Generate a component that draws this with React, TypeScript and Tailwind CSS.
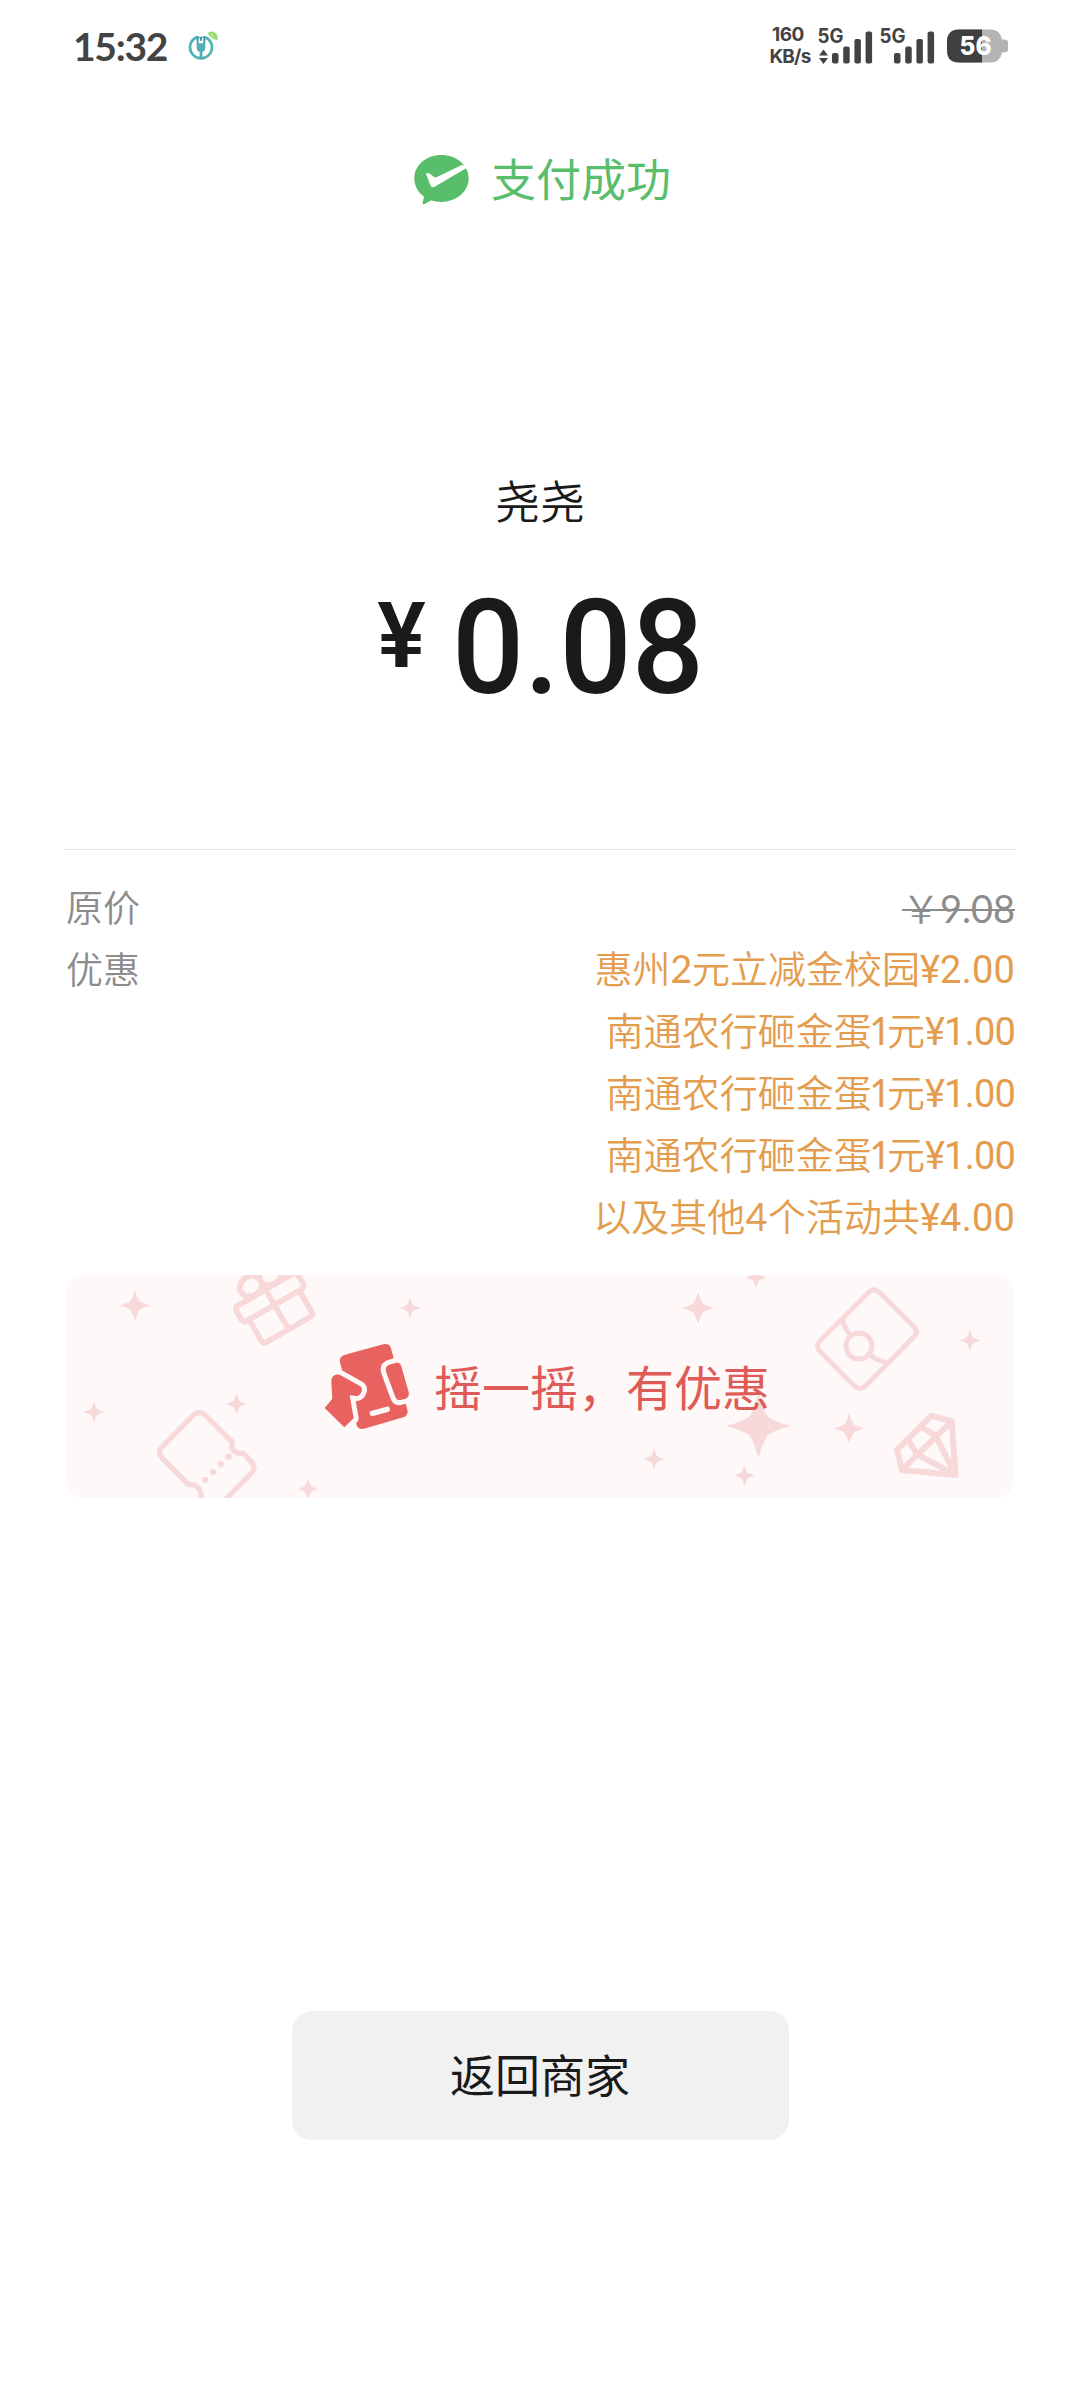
import React from 'react';

interface Discount {
  name: string;
  amount: string;
}

const discounts: Discount[] = [
  { name: '惠州2元立减金校园', amount: '¥2.00' },
  { name: '南通农行砸金蛋1元', amount: '¥1.00' },
  { name: '南通农行砸金蛋1元', amount: '¥1.00' },
  { name: '南通农行砸金蛋1元', amount: '¥1.00' },
  { name: '以及其他4个活动共', amount: '¥4.00' },
];

// x, y, radius
const stars: [number, number, number][] = [
  [69, 30.5, 15.5],
  [28, 137, 10.5],
  [170.5, 129, 10.5],
  [242, 214, 10.5],
  [344, 33, 10.5],
  [632, 33, 16],
  [690, 2.5, 10.5],
  [692.5, 151, 32],
  [588, 184, 10.5],
  [678.5, 200.5, 10.5],
  [904, 65.5, 10.5],
  [783, 153.5, 15.5],
];

const Signal = ({ data = false }: { data?: boolean }) => (
  <svg className="overflow-visible" width="56" height="44" viewBox="0 -4 56 44" fill="#434343">
    <text x="-0.5" y="14.5" fontSize="19.5" fontWeight="700" fontFamily="Inter, sans-serif" textLength="26" lengthAdjust="spacingAndGlyphs">
      5G
    </text>
    {data && <path d="M1 27.500l4.500-6 4.500 6zM1 30h9l-4.500 6z" />}
    <rect x="14" y="25" width="6.500" height="10.500" rx="2" />
    <rect x="25.200" y="18.500" width="6.500" height="17" rx="2" />
    <rect x="36.400" y="11" width="6.500" height="24.500" rx="2" />
    <rect x="47.600" y="3.500" width="6.500" height="32" rx="2" />
  </svg>
);

const StatusBar = () => (
  <header className="flex h-[92px] items-center justify-between pl-[73px] pr-[71px] text-[#434343]">
    <div className="flex items-center">
      <span className="w-[96px] whitespace-nowrap font-['Lato',sans-serif] text-[39px] font-bold leading-none tracking-[-1.3px]">15:32</span>
      <svg className="ml-[19px]" width="30" height="30" viewBox="414 59 90 90" fill="none">
        <circle cx="453" cy="108" r="33" stroke="#4fb5b4" strokeWidth="8" />
        <path d="M440 65h26v12h-26z" fill="#fff" />
        <path d="M443 74v34l10 9 10-9V74" stroke="#4796b8" strokeWidth="6" />
        <path d="M453 76v12" stroke="#4796b8" strokeWidth="6" />
        <path d="M441 96h24v20l-8 7v20h-8v-20l-8-7z" fill="#50aeb5" />
        <path d="M474 64q14-8 25 4 5 8 3 18-14-1-20-8-7-7-8-14z" fill="#8fd96b" />
        <path d="M480 68l15 12M490 64l-4 14" stroke="#d6f3c2" strokeWidth="2" />
      </svg>
    </div>
    <div className="flex items-center">
      <div className="mr-[6px] flex w-[44px] flex-col items-center whitespace-nowrap pb-px font-['Inter',sans-serif] text-[19px] font-bold leading-[22px] tracking-[-0.8px]">
        <span className="pr-[4px] tracking-[-0.5px]">160</span>
        <span>KB/s</span>
      </div>
      <Signal data />
      <div className="ml-[6px] flex">
        <Signal />
      </div>
      <svg className="ml-[11px]" width="62" height="34" viewBox="0 0 62 34">
        <path d="M12 0.500h32q9 0 11 10h2q4 0 4 3v7q0 3-4 3h-2q-2 10-11 10H12Q0 33.500 0 21V13Q0 .5 12 .5z" fill="#b4b4b4" />
        <path d="M12 .5h23v33H12Q0 33.500 0 21V13Q0 .5 12 .5z" fill="#3f3f3f" />
        <text x="12.500" y="26" fontSize="26" fontWeight="800" fontFamily="Inter, sans-serif" fill="#fff" textLength="32" lengthAdjust="spacingAndGlyphs">
          56
        </text>
      </svg>
    </div>
  </header>
);

const PaySuccessIcon = () => (
  <svg width="55" height="50" viewBox="74 75 165 150">
    <path
      d="M156 75c46 0 82 31 82 70s-36 71-82 71c-11 0-21-2-30-5l-20 11c-5 2-7 1-6-4l4-18c-18-13-29-32-29-55 0-39 35-70 81-70z"
      fill="#59be6b"
    />
    <path d="M110 131q4-4 9-1l14 10q5 3 10 1l76-37 14 9-97 57q-9 5-13-4z" fill="#fff" />
  </svg>
);

const ShakeIcon = () => (
  <svg width="86" height="86" viewBox="73 248 258 258" strokeLinejoin="round" strokeLinecap="round">
    <path d="M136 280l115-31q18-4 23 12l49 184q4 17-12 23l-118 34q-17 4-22-11l-50-188q-4-17 15-23z" fill="#e8625f" />
    <path
      d="M267 311l22-7q11-2 15 8l23 80q3 15-9 20l-16 4q-11 2-15-9l-28-76q-4-14 8-20z"
      fill="#e8625f"
      stroke="#fef8f8"
      strokeWidth="30"
      paintOrder="stroke"
    />
    <path
      d="M95 363q-2-20 18-24 7 0 14 5l55 31q7 6 4 15-4 12-14 14l-22-2 12 69-28 27-59-58 23-28z"
      fill="#e8625f"
      stroke="#fef8f8"
      strokeWidth="30"
      paintOrder="stroke"
    />
    <path d="M218 456l45-12" stroke="#fef8f8" strokeWidth="16" />
  </svg>
);

const BannerPattern = () => (
  <svg className="absolute inset-0" width="946" height="223" viewBox="1 0 946 223" fill="none" stroke="#f8d9da" strokeLinejoin="round" strokeLinecap="round">
    {stars.map(([x, y, r]) => (
      <path
        key={`${x}-${y}`}
        transform={`translate(${x} ${y}) scale(${r})`}
        d="M0-1Q.14-.5 .29-.29 .5-.14 1 0 .5 .14 .29 .29 .14 .5 0 1-.14 .5-.29 .29-.5 .14-1 0-.5-.14-.29-.29-.14-.5 0-1z"
        fill="#f8d9da"
        stroke="none"
      />
    ))}
    {/* gift */}
    <g transform="translate(-16 -15) scale(.3333) translate(672 132) rotate(-30)" strokeWidth="17">
      <rect x="-108" y="-50" width="214" height="53" rx="12" />
      <path d="M-88 3v75q0 10 10 10H76q10 0 10-10V3M0-50V88" />
      <ellipse cx="-34" cy="-81" rx="34" ry="29" />
      <ellipse cx="34" cy="-81" rx="34" ry="29" />
    </g>
    {/* ticket */}
    <g transform="translate(-16 -15) scale(.3333)" strokeWidth="16">
      <path d="M453 722q4-52-38-48L335 592q-13-15 0-30l97-98q16-13 32 0l82 82q-4 32 22 34 12-1 18 6l20 22q12 15 0 30L510 735" />
      <path d="M536 590l-71 70" strokeWidth="19" strokeDasharray="0 33" />
    </g>
    {/* red packet */}
    <g transform="translate(714 -15) scale(.3333)" strokeWidth="15">
      <path d="M265 98q17-16 34 0l104 103q13 14 0 28L257 378q-17 15-34 0L119 273q-13-14 0-29z" />
      <circle cx="237" cy="258" r="39" />
      <path d="M187 178q8 32 24 46M270 284q14 16 50 24" />
    </g>
    {/* diamond */}
    <g transform="translate(714 -15) scale(.3333)" strokeWidth="18">
      <path d="M455 467l60 17 12 161-161-15-15-60zM515 484L366 630M411 583l116 62-62-120M425 502l40 23M385 540l26 43" />
    </g>
  </svg>
);

const DiscountRow = ({ name, amount }: Discount) => (
  <div className="flex h-[62px]">
    <span className="-mt-[3px]">
      {name.split(/(\d)/).map((part, i) =>
        /\d/.test(part) ? (
          <span key={i} className="font-['Lato',sans-serif] font-normal proportional-nums">
            {part}
          </span>
        ) : (
          part
        )
      )}
    </span>
    <span className={`font-['Roboto',sans-serif] font-normal ${amount.startsWith('¥1') ? 'tracking-[-0.8px]' : 'tracking-[0.2px]'}`}>
      {amount}
    </span>
  </div>
);

const App: React.FC = () => {
  return (
    <main className="flex h-[2400px] w-[1080px] flex-col bg-white font-['Noto_Sans_CJK_SC',sans-serif] text-[#1a1a1a]">
      <StatusBar />

      <div className="mt-[56px] flex h-[64px] items-center justify-center gap-[22px] pl-[5px]">
        <PaySuccessIcon />
        <span className="pb-[4px] text-[45px] leading-[60px] text-[#59be6b]">支付成功</span>
      </div>

      <div className="mt-[256px] text-center text-[45px] font-[350] leading-[64px]">尧尧</div>

      <div className="mt-[64px] flex h-[104px] items-start justify-center font-['Roboto',sans-serif] font-medium">
        <span className="mr-[26px] text-[91px] font-semibold leading-[80px]">¥</span>
        <span className="-mr-[9px] origin-left scale-x-[0.97] text-[131px] leading-[104px]">0.08</span>
      </div>

      <section className="mx-[65px] mt-[149px] border-t border-[#e3e3e3] pt-[27px] text-[37px] font-[350] leading-[62px]">
        <div className="flex h-[62px] justify-between text-[#8c8c8c]">
          <span className="-mt-[2px] pl-px">原价</span>
          <span className="relative -mt-px text-[38px] after:absolute after:inset-x-0 after:top-[33px] after:h-[2px] after:bg-[#8c8c8c]">
            ￥<span className="font-['Lato',sans-serif] font-normal">9.08</span>
          </span>
        </div>
        <div className="flex justify-between">
          <span className="-mt-[2px] pl-px text-[#8c8c8c]">优惠</span>
          <div className="flex flex-col items-end text-[38px] text-[#e49d4e]">
            {discounts.map((item, i) => (
              <DiscountRow key={i} {...item} />
            ))}
          </div>
        </div>
      </section>

      <section className="relative mx-[67px] mt-[26px] flex h-[223px] shrink-0 items-center overflow-hidden rounded-[16px] bg-[#fef8f8] pl-[257px]">
        <BannerPattern />
        <div className="relative flex items-center gap-[24px]">
          <ShakeIcon />
          <span className="pb-[4px] text-[48px] leading-[64px] text-[#df5b57]">摇一摇，有优惠</span>
        </div>
      </section>

      <button className="mx-auto mt-[513px] h-[129px] w-[497px] shrink-0 rounded-[20px] bg-[#f1f1f1] pb-[4px] text-[45px] leading-none">
        返回商家
      </button>
    </main>
  );
};

export default App;
